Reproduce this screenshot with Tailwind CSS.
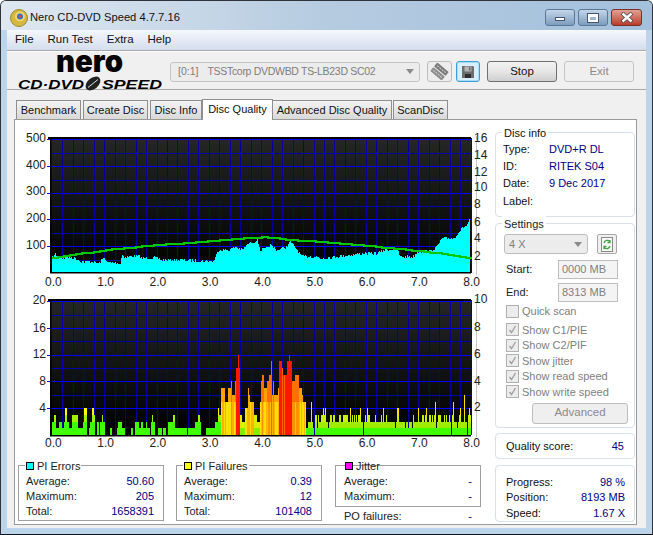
<!DOCTYPE html>
<html lang="en">
<head>
  <meta charset="UTF-8" />
  <title>Nero CD-DVD Speed</title>
  <script src="https://cdn.jsdelivr.net/npm/@tailwindcss/browser@4"></script>
</head>
<body class="bg-white">
  <div class="w-[653px] h-[535px] overflow-hidden flex flex-col rounded-t-[6px] border border-[#30343a] border-b-[#101010] bg-[#bcd5ea] font-['Liberation_Sans',sans-serif] text-[11px] text-[#111]">
    <!-- Title bar -->
    <div class="h-[29px] shrink-0 flex items-center pt-[4px] pl-[9px] pr-[3px] bg-gradient-to-r from-[#dfe8f1] via-[#b5cbe0] to-[#a3c0dc]">
      <svg width="18" height="18" viewBox="0 0 18 18"><circle cx="9" cy="9" r="8.5" fill="#d6b83c" stroke="#9a8a30" /><circle cx="10" cy="7.5" r="5" fill="#e8d77a" /><circle cx="10" cy="7.5" r="3" fill="#3f6fc0" /><circle cx="10" cy="7.5" r="1.3" fill="#d8483c" /></svg>
      <span class="ml-[2px] text-[11.2px] text-[#101010]">Nero CD-DVD Speed 4.7.7.16</span>
      <div class="ml-auto flex gap-[3px] mr-[7px]">
        <div class="w-[30px] h-[17px] rounded-[3px] border border-[#5d7895] bg-gradient-to-b from-[#c3d6ea] to-[#7d9cbd] flex items-center justify-center"><div class="w-[10px] h-[4px] mt-[3px] bg-white border border-[#45586e]"></div></div>
        <div class="w-[30px] h-[17px] rounded-[3px] border border-[#5d7895] bg-gradient-to-b from-[#c3d6ea] to-[#7d9cbd] flex items-center justify-center"><div class="w-[10px] h-[8px] border-2 border-t-[3px] border-white outline outline-[#45586e]"></div></div>
        <div class="w-[31px] h-[17px] rounded-[3px] border border-[#7a2f28] bg-gradient-to-b from-[#e2a096] to-[#b93a2a] flex items-center justify-center">
          <svg width="14" height="11" viewBox="0 0 14 11"><path d="M2 1 L12 10 M12 1 L2 10" stroke="#4a4a4a" stroke-width="4" /><path d="M2.5 1.5 L11.5 9.5 M11.5 1.5 L2.5 9.5" stroke="#fff" stroke-width="2.4" /></svg>
        </div>
      </div>
    </div>

    <!-- Client area -->
    <div class="mx-[6px] h-[498px] shrink-0 flex flex-col bg-[#f0f0f0]">
      <div class="h-[20px] shrink-0 flex items-center pl-[8px] gap-[14px] bg-gradient-to-b from-[#f5f8fd] to-[#d5dded] text-[11.5px]">
        <span>File</span><span>Run Test</span><span>Extra</span><span>Help</span>
      </div>
      <!-- Toolbar -->
      <div class="h-[40px] shrink-0 flex items-center pt-[3px] border-y border-y-[#a8a8a8] shadow-[inset_0_1px_0_#fff]">
        <svg class="ml-[11px] overflow-visible" width="146" height="36" viewBox="18 53.5 146 36">
          <text x="56" y="71" font-size="30" font-weight="900" textLength="67" lengthAdjust="spacingAndGlyphs" style="font-family:Inter,sans-serif">nero</text>
          <text x="18" y="88" font-size="13" font-weight="700" font-style="italic" textLength="66" lengthAdjust="spacingAndGlyphs">CD·DVD</text>
          <ellipse cx="93" cy="83" rx="8.5" ry="5.5" transform="rotate(-40 93 83)" fill="#222" />
          <path d="M88 87 L98 79" stroke="#ddd" stroke-width="1" />
          <text x="102" y="88" font-size="13" font-weight="700" font-style="italic" textLength="60" lengthAdjust="spacingAndGlyphs">SPEED</text>
        </svg>
        <div class="ml-[6px] w-[250px] h-[20px] rounded-[3px] border border-[#c4c4c4] bg-[#ececec] flex items-center pl-[7px] text-[#7d7d7d] text-[10.5px]">
          <span>[0:1]</span><span class="ml-[9px] tracking-[-0.3px]">TSSTcorp DVDWBD TS-LB23D SC02</span>
          <span class="ml-auto mr-[5px] w-0 h-0 border-x-[4px] border-x-transparent border-t-[5px] border-t-[#8a8a8a]"></span>
        </div>
        <div class="ml-[7px] w-[25px] h-[21px] rounded-[3px] border border-[#bdbdbd] bg-[#ededed] flex items-center justify-center">
          <svg width="19" height="17" viewBox="0 0 19 17"><g transform="rotate(40 9.5 8.5)"><rect x="2" y="3" width="15" height="5" rx="1" fill="#7b7b7b" /><rect x="2" y="9" width="15" height="5" rx="1" fill="#8e8e8e" /><path d="M4 5.5h11M4 11.5h11" stroke="#d0d0d0" stroke-dasharray="2 1" /></g></svg>
        </div>
        <div class="ml-[4px] w-[24px] h-[21px] rounded-[3px] border border-[#3c9fd8] bg-[#d8eefa] flex items-center justify-center shadow-[inset_0_0_0_1px_#a6dcf6]">
          <svg width="14" height="14" viewBox="0 0 14 14"><path d="M1 1h11l1 1v11H1z" fill="#6d6d6d" /><rect x="3.5" y="1.5" width="7" height="5" fill="#b5b5b5" /><rect x="4" y="9" width="6" height="4" fill="#2f2f2f" /><rect x="8" y="2" width="1.5" height="3.5" fill="#6d6d6d" /></svg>
        </div>
        <button class="ml-[7px] w-[70px] h-[21px] rounded-[3px] border border-[#707070] bg-gradient-to-b from-[#f2f2f2] via-[#e6e6e6] to-[#cfcfcf] text-[11.5px]">Stop</button>
        <button class="ml-[7px] w-[70px] h-[21px] rounded-[3px] border border-[#c4c4c4] bg-[#efefef] text-[11.5px] text-[#8a8a8a]">Exit</button>
      </div>

      <!-- Tabs -->
      <div class="h-[29px] shrink-0 flex items-end pl-[9px]">
        <div class="w-[65px] h-[19px] mr-[2px] border border-b-0 border-[#8e8e8e] bg-gradient-to-b from-[#f4f4f4] to-[#d9d9d9] flex items-center justify-center">Benchmark</div>
        <div class="w-[65px] h-[19px] mr-[2px] border border-b-0 border-[#8e8e8e] bg-gradient-to-b from-[#f4f4f4] to-[#d9d9d9] flex items-center justify-center">Create Disc</div>
        <div class="w-[52px] h-[19px] border border-b-0 border-[#8e8e8e] bg-gradient-to-b from-[#f4f4f4] to-[#d9d9d9] flex items-center justify-center">Disc Info</div>
        <div class="relative z-10 w-[71px] h-[21px] -mb-px border border-b-0 border-[#8e8e8e] bg-white flex items-center justify-center pb-[2px]">Disc Quality</div>
        <div class="w-[119px] h-[19px] mr-px border border-b-0 border-l-0 border-[#8e8e8e] bg-gradient-to-b from-[#f4f4f4] to-[#d9d9d9] flex items-center justify-center whitespace-nowrap">Advanced Disc Quality</div>
        <div class="w-[55px] h-[19px] border border-b-0 border-[#8e8e8e] bg-gradient-to-b from-[#f4f4f4] to-[#d9d9d9] flex items-center justify-center">ScanDisc</div>
      </div>

      <!-- Panel -->
      <div class="ml-[7px] w-[623px] h-[406px] shrink-0 flex border border-[#9a9a9a] bg-white">
        <div class="w-[480px] shrink-0">
          <svg id="chart-top" class="block" width="480" height="172" viewBox="15 120 480 172"></svg>
          <svg id="chart-bottom" class="block" width="480" height="164" viewBox="15 292 480 164"></svg>
          <div class="mt-[9px] ml-[3px] flex items-start">
            <!-- PI Errors -->
            <div class="w-[146px] h-[56px] border border-[#a0a0a0]">
              <div class="-mt-[8px] ml-[6px] w-fit h-[16px] px-[1px] bg-white flex items-center gap-[3px]"><span class="w-[8px] h-[8px] bg-[#00ffff] border border-black"></span><span class="text-[#222]">PI Errors</span></div>
              <div class="px-[7px] pr-[9px] text-[#222]">
                <div class="h-[15px] flex items-center justify-between"><span>Average:</span><span class="text-[#000080]">50.60</span></div>
                <div class="h-[15px] flex items-center justify-between"><span>Maximum:</span><span class="text-[#000080]">205</span></div>
                <div class="h-[15px] flex items-center justify-between"><span>Total:</span><span class="text-[#000080]">1658391</span></div>
              </div>
            </div>
            <!-- PI Failures -->
            <div class="ml-[12px] w-[146px] h-[56px] border border-[#a0a0a0]">
              <div class="-mt-[8px] ml-[6px] w-fit h-[16px] px-[1px] bg-white flex items-center gap-[3px]"><span class="w-[8px] h-[8px] bg-[#ffff00] border border-black"></span><span class="text-[#222]">PI Failures</span></div>
              <div class="px-[7px] pr-[9px] text-[#222]">
                <div class="h-[15px] flex items-center justify-between"><span>Average:</span><span class="text-[#000080]">0.39</span></div>
                <div class="h-[15px] flex items-center justify-between"><span>Maximum:</span><span class="text-[#000080]">12</span></div>
                <div class="h-[15px] flex items-center justify-between"><span>Total:</span><span class="text-[#000080]">101408</span></div>
              </div>
            </div>
            <!-- Jitter -->
            <div class="ml-[13px] w-[146px]">
              <div class="h-[42px] border border-[#a0a0a0]">
                <div class="-mt-[8px] ml-[9px] w-fit h-[16px] flex items-center gap-[3px]"><span class="w-[8px] h-[8px] bg-[#ff00ff] border border-black"></span><span class="text-[#222]">Jitter</span></div>
                <div class="px-[8px] text-[#222]">
                  <div class="h-[15px] flex items-center justify-between"><span>Average:</span><span class="text-[#000080]">-</span></div>
                  <div class="h-[15px] flex items-center justify-between"><span>Maximum:</span><span class="text-[#000080]">-</span></div>
                </div>
              </div>
              <div class="h-[15px] mt-[2px] px-[9px] flex items-center justify-between text-[#222]"><span>PO failures:</span><span class="text-[#000080]">-</span></div>
            </div>
          </div>
        </div>

        <!-- Right column -->
        <div class="w-[140px] shrink-0">
          <div class="mt-[12px] h-[85px] rounded-[4px] border border-[#d9e0e6]">
            <div class="-mt-[8px] ml-[6px] w-fit h-[16px] px-[2px] bg-white flex items-center">Disc info</div>
            <div class="pl-[7px]">
              <div class="h-[17px] flex items-center"><span class="w-[46px]">Type:</span><span class="text-[#000080]">DVD+R DL</span></div>
              <div class="h-[17px] flex items-center"><span class="w-[46px]">ID:</span><span class="text-[#000080]">RITEK S04</span></div>
              <div class="h-[17px] flex items-center"><span class="w-[46px]">Date:</span><span class="text-[#000080]">9 Dec 2017</span></div>
              <div class="h-[18px] flex items-center"><span class="w-[46px]">Label:</span></div>
            </div>
          </div>
          <div class="mt-[6px] h-[205px] rounded-[4px] border border-[#d9e0e6] text-[#808080]">
            <div class="-mt-[8px] ml-[6px] w-fit h-[16px] px-[2px] bg-white flex items-center text-[#222]">Settings</div>
            <div class="mt-[2px] ml-[8px] flex items-start">
              <div class="w-[84px] h-[20px] rounded-[3px] border border-[#bdbdbd] bg-[#ececec] flex items-center pl-[4px]"><span>4 X</span><span class="ml-auto mr-[5px] w-0 h-0 border-x-[4px] border-x-transparent border-t-[5px] border-t-[#8a8a8a]"></span></div>
              <div class="ml-[9px] w-[20px] h-[20px] border border-[#a8a8a8] rounded-[2px] bg-[#efefef] flex items-center justify-center">
                <svg width="12" height="15" viewBox="0 0 12 15"><rect x="0.5" y="0.5" width="11" height="14" fill="#f8f8f8" stroke="#8a8a8a" /><path d="M3 6 A3.5 3.5 0 0 1 9 4.5 M9 3v2.5H6.5" fill="none" stroke="#43a047" stroke-width="1.3" /><path d="M9 9 A3.5 3.5 0 0 1 3 10.5 M3 12v-2.5h2.5" fill="none" stroke="#43a047" stroke-width="1.3" /></svg>
              </div>
            </div>
            <div class="mt-[6px] ml-[10px] flex items-center h-[19px]"><span class="w-[52px] text-[#222]">Start:</span><div class="w-[60px] h-[19px] border border-[#bdbdbd] bg-[#f4f4f4] flex items-center pl-[3px]">0000 MB</div></div>
            <div class="mt-[4px] ml-[10px] flex items-center h-[19px]"><span class="w-[52px] text-[#222]">End:</span><div class="w-[60px] h-[19px] border border-[#bdbdbd] bg-[#f4f4f4] flex items-center pl-[3px]">8313 MB</div></div>
            <div class="mt-[3px] ml-[10px] h-[13px] flex items-center"><span class="w-[13px] h-[13px] border border-[#b0b0b0] bg-[#ececec]"></span><span class="ml-[3px]">Quick scan</span></div>
            <div class="mt-[4px] ml-[10px]">
              <div class="h-[15.5px] flex items-center"><span class="w-[13px] h-[13px] border border-[#b0b0b0] bg-[#ececec] flex items-center justify-center"><svg width="9" height="9" viewBox="0 0 9 9"><path d="M1.5 5 L3.5 7.5 L7.5 1" fill="none" stroke="#a0a0a0" stroke-width="1.4" /></svg></span><span class="ml-[3px]">Show C1/PIE</span></div>
              <div class="h-[15.5px] flex items-center"><span class="w-[13px] h-[13px] border border-[#b0b0b0] bg-[#ececec] flex items-center justify-center"><svg width="9" height="9" viewBox="0 0 9 9"><path d="M1.5 5 L3.5 7.5 L7.5 1" fill="none" stroke="#a0a0a0" stroke-width="1.4" /></svg></span><span class="ml-[3px]">Show C2/PIF</span></div>
              <div class="h-[15.5px] flex items-center"><span class="w-[13px] h-[13px] border border-[#b0b0b0] bg-[#ececec] flex items-center justify-center"><svg width="9" height="9" viewBox="0 0 9 9"><path d="M1.5 5 L3.5 7.5 L7.5 1" fill="none" stroke="#a0a0a0" stroke-width="1.4" /></svg></span><span class="ml-[3px]">Show jitter</span></div>
              <div class="h-[15.5px] flex items-center"><span class="w-[13px] h-[13px] border border-[#b0b0b0] bg-[#ececec] flex items-center justify-center"><svg width="9" height="9" viewBox="0 0 9 9"><path d="M1.5 5 L3.5 7.5 L7.5 1" fill="none" stroke="#a0a0a0" stroke-width="1.4" /></svg></span><span class="ml-[3px]">Show read speed</span></div>
              <div class="h-[15.5px] flex items-center"><span class="w-[13px] h-[13px] border border-[#b0b0b0] bg-[#ececec] flex items-center justify-center"><svg width="9" height="9" viewBox="0 0 9 9"><path d="M1.5 5 L3.5 7.5 L7.5 1" fill="none" stroke="#a0a0a0" stroke-width="1.4" /></svg></span><span class="ml-[3px]">Show write speed</span></div>
            </div>
            <button class="mt-[3px] ml-[36px] w-[96px] h-[21px] rounded-[3px] border border-[#bdbdbd] bg-[#efefef] text-[#8a8a8a] text-[11.5px]">Advanced</button>
          </div>
          <div class="mt-[5px] h-[26px] rounded-[4px] border border-[#d9e0e6] pl-[10px] pr-[10px] flex items-center justify-between"><span>Quality score:</span><span class="text-[#000080]">45</span></div>
          <div class="mt-[6px] h-[57px] rounded-[4px] border border-[#d9e0e6] pl-[10px] pr-[9px] pt-[8px]">
            <div class="h-[15.5px] flex items-center justify-between"><span>Progress:</span><span class="text-[#000080]">98 %</span></div>
            <div class="h-[15.5px] flex items-center justify-between"><span>Position:</span><span class="text-[#000080]">8193 MB</span></div>
            <div class="h-[15.5px] flex items-center justify-between"><span>Speed:</span><span class="text-[#000080]">1.67 X</span></div>
          </div>
        </div>
      </div>
    </div>
  </div>

  <script>
    // seeded so every render draws the same noise
    let seed = 7;
    const rnd = () => (seed = (seed * 16807) % 2147483647) / 2147483647;

    const lerp = (pts, x) => {
      for (let i = 1; i < pts.length; i++) {
        if (x <= pts[i][0]) {
          const [x0, y0] = pts[i - 1], [x1, y1] = pts[i];
          return y0 + (y1 - y0) * (x - x0) / (x1 - x0);
        }
      }
      return pts[pts.length - 1][1];
    };

    function frame(id, top, bottom, majors, minors, leftLabels, rightLabels, xLabelY) {
      let s = `<defs><linearGradient id="${id}-bg" x1="0" y1="0" x2="0" y2="1"><stop offset="0" stop-color="#262626"/><stop offset="1" stop-color="#000"/></linearGradient></defs>`;
      s += `<rect x="50" y="${top}" width="421" height="${bottom - top}" fill="url(#${id}-bg)"/>`;
      for (let k = 1; k <= 40; k++) {
        const x = Math.round(51.8 + 10.47 * k);
        s += `<rect x="${x}" y="${top}" width="1" height="${bottom - top}" fill="#00009a"/>`;
      }
      minors.forEach(y => s += `<rect x="50" y="${y}" width="421" height="1" fill="#0000a8"/>`);
      majors.forEach(y => s += `<rect x="47" y="${y}" width="424" height="1" fill="#0000ff"/>`);
      s += `<rect x="476" y="${top - 2}" width="1" height="${bottom - top + 4}" fill="#c8c8c8"/>`;
      leftLabels.forEach(([t, y]) => s += `<text x="46" y="${y + 4}" font-size="12" text-anchor="end" fill="#222">${t}</text>`);
      rightLabels.forEach(([t, y]) => s += `<text x="474" y="${y + 4}" font-size="12" fill="#222">${t}</text>`);
      for (let i = 0; i <= 8; i++) {
        s += `<text x="${53.3 + 52.3 * i}" y="${xLabelY + 4}" font-size="12" text-anchor="middle" fill="#222">${i}.0</text>`;
      }
      return s;
    }

    function drawTop() {
      const fromA = p => [15 + p[0] / 3, 125 + p[1] / 3];
      const fromB = p => [250 + p[0] / 3, 125 + p[1] / 3];
      const profile = [[110,398],[120,388],[140,400],[155,395],[180,400],[200,410],[230,410],[250,415],[268,398],[275,413],[315,415],[320,388],[330,397],[370,392],[380,400],[420,398],[440,405],[500,405],[560,408],[595,408],[610,375],[640,375],[660,365],[680,375],[700,355],[720,350]].map(fromA)
        .concat([[20,340],[30,375],[50,370],[60,360],[80,375],[110,365],[120,348],[140,375],[155,395],[200,395],[210,400],[300,390],[340,385],[380,385],[400,375],[440,372],[450,395],[490,395],[500,380],[540,378],[560,365],[575,340],[610,340],[630,315],[650,300],[660,280]].map(fromB));
      const speed = [[110,398],[200,385],[300,372],[400,362],[500,355],[600,347],[720,338]].map(fromA)
        .concat([[40,337],[120,345],[200,350],[300,358],[400,368],[500,378],[600,390],[655,400]].map(fromB));

      let s = frame('top', 138, 273,
        [139, 166, 193, 219, 246], [153, 180, 206, 233, 260],
        [[500, 138], [400, 165], [300, 191], [200, 218], [100, 245]],
        [[16, 138], [14, 155], [12, 172], [10, 187], [8, 204], [6, 222], [4, 238], [2, 256]], 282);

      for (let x = 52; x < 470; x++) {
        const y = Math.round(lerp(profile, x) + rnd() * 3 - 1.5);
        s += `<rect x="${x}" y="${y}" width="1" height="${273 - y}" fill="#00ffff"/>`;
      }
      let line = '';
      for (let x = 52; x < 470; x += 6) line += `${x},${Math.round(lerp(speed, x))} ${x + 6},${Math.round(lerp(speed, x))} `;
      s += `<polyline points="${line}" fill="none" stroke="#00c800" stroke-width="1.5" shape-rendering="crispEdges"/>`;
      s += `<rect x="48" y="137" width="423" height="2" fill="#000"/><rect x="50" y="137" width="1.5" height="136" fill="#000"/><rect x="50" y="272" width="421" height="1.5" fill="#000"/>`;
      document.getElementById('chart-top').innerHTML = s;
    }

    function drawBottom() {
      const vals = {};
      const paint = (off, segs) => segs.forEach(([a, b, v]) => {
        for (let x = Math.round(off + a / 3); x <= Math.round(off + b / 3); x++) vals[x] = v;
      });
      // left part: [from, to, value] read off the chart at 3x
      paint(15, [[110,118,2],[118,122,3],[123,147,1],[132,138,2],[147,150,2],[150,155,4],[155,160,2],[163,168,1],[172,189,3],[189,200,1],[204,207,2],[207,213,4],[222,226,1],[226,229,2],[230,237,3],[232,234,4],[246,250,2],[254,262,2],[262,264,3],[264,268,2],[285,288,1],[305,310,1],[310,320,2],[320,327,1],[348,351,1],[360,372,2],[372,392,1],[378,382,2],[392,395,2],[395,402,1],[408,412,2],[412,414,3],[414,418,2],[430,438,1],[445,450,1],[460,465,2],[465,474,2],[474,480,3],[480,495,1],[497,513,1],[520,540,1],[540,543,2],[547,555,2],[550,552,3],[573,600,1],[600,603,2],[607,610,2],[610,613,4],[613,617,3]]);
      // centre part with the error burst
      paint(15, [[617,630,7],[630,640,5],[640,648,7],[648,652,8],[652,660,6],[660,664,8],[664,668,10],[668,671,12],[671,676,10],[676,680,3],[680,690,2],[690,698,4],[698,702,7],[702,708,6],[708,720,5]]);
      paint(250, [[0,12,5],[12,22,3],[22,30,2],[30,33,5],[33,36,8],[36,42,9],[42,50,7],[50,56,8],[56,63,9],[63,66,11],[66,70,6],[70,73,8],[73,84,6],[84,87,7],[87,96,11],[96,100,10],[100,104,9],[104,110,9],[110,116,11],[116,120,12],[120,125,11],[125,135,8],[135,147,9],[147,155,7],[155,160,6],[160,168,5]]);
      // right part is low noise with a few spikes
      for (let x = 306; x < 471; x++) {
        const r = rnd();
        vals[x] = r < 0.03 ? 0 : r < 0.12 ? 1 : r < 0.72 ? 2 : 3;
      }
      [183,218,225,300,330,352,398,440,445,505,528,555,610,630,657].forEach(z => vals[Math.round(250 + z / 3)] = 4);
      [183,555,610].forEach(z => vals[Math.round(250 + z / 3)] = 5);
      vals[Math.round(250 + 643 / 3)] = 6;

      let s = frame('bot', 300, 435,
        [301, 328, 355, 381, 408], [315, 341, 368, 395],
        [[20, 300], [16, 328], [12, 354], [8, 381], [4, 408]],
        [[10, 299], [8, 327], [6, 354], [4, 381], [2, 407]], 443);

      const unit = 6.7, base = 435;
      const band = (x, from, to, c) => {
        const y0 = Math.round(base - to * unit), y1 = Math.round(base - from * unit);
        s += `<rect x="${x}" y="${y0}" width="1" height="${y1 - y0}" fill="${c}"/>`;
      };
      for (let x = 52; x < 471; x++) {
        const v = vals[x] || 0;
        if (!v) continue;
        if (x < 221) {
          band(x, 0, Math.min(v, 2), '#40ff00');
          if (v > 2) band(x, 2, Math.min(v, 3), '#a0f000');
          if (v > 3) band(x, 3, v, '#ffff00');
        } else if (x < 306) {
          const r = rnd();
          if (v >= 10 || (x >= 279 && x < 292)) {
            band(x, 0, v, r < 0.75 ? '#ff1800' : '#ff6000');
          } else if (v >= 8) {
            band(x, 0, 5, r < 0.5 ? '#ffc000' : '#ff9000');
            band(x, 5, v, '#ff7000');
          } else if (v >= 4) {
            band(x, 0, 5 < v ? 5 : v, r < 0.6 ? '#ffe000' : '#ffb000');
            if (v > 5) band(x, 5, v, '#ffa000');
          } else {
            band(x, 0, 1, '#80f000');
            band(x, 1, v, '#d8f000');
          }
        } else {
          band(x, 0, 1, '#40ff00');
          if (v > 1) band(x, 1, Math.min(v, 2), '#a0ec00');
          if (v > 2) band(x, 2, Math.min(v, 3), '#c8f000');
          if (v > 3) band(x, 3, v, '#ffe000');
        }
      }
      s += `<rect x="48" y="299" width="423" height="2" fill="#000"/><rect x="50" y="299" width="1.5" height="136" fill="#000"/><rect x="50" y="435" width="421" height="1.5" fill="#000"/>`;
      document.getElementById('chart-bottom').innerHTML = s;
    }

    drawTop();
    drawBottom();
  </script>
</body>
</html>
